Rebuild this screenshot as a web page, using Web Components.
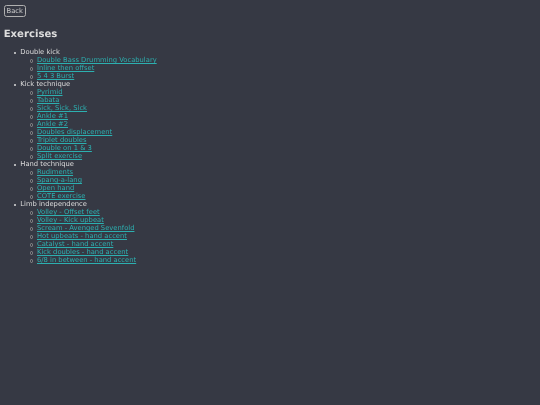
<!DOCTYPE html>
<html>
<head>
<meta charset="utf-8">
<title>Exercises</title>
<style>
  html, body { margin: 0; height: 100%; background: #363944; }
</style>
</head>
<body>
<exercise-page>
  <back-button slot="back">Back</back-button>
  <span slot="title">Exercises</span>
  <exercise-group name="Double kick">
    <exercise-link>Double Bass Drumming Vocabulary</exercise-link>
    <exercise-link>Inline then offset</exercise-link>
    <exercise-link>5 4 3 Burst</exercise-link>
  </exercise-group>
  <exercise-group name="Kick technique">
    <exercise-link>Pyrimid</exercise-link>
    <exercise-link>Tabata</exercise-link>
    <exercise-link>Sick, Sick, Sick</exercise-link>
    <exercise-link>Ankle #1</exercise-link>
    <exercise-link>Ankle #2</exercise-link>
    <exercise-link>Doubles displacement</exercise-link>
    <exercise-link>Triplet doubles</exercise-link>
    <exercise-link>Double on 1 &amp; 3</exercise-link>
    <exercise-link>Split exercise</exercise-link>
  </exercise-group>
  <exercise-group name="Hand technique">
    <exercise-link>Rudiments</exercise-link>
    <exercise-link>Spang-a-lang</exercise-link>
    <exercise-link>Open hand</exercise-link>
    <exercise-link>COTE exercise</exercise-link>
  </exercise-group>
  <exercise-group name="Limb independence">
    <exercise-link>Volley - Offset feet</exercise-link>
    <exercise-link>Volley - Kick upbeat</exercise-link>
    <exercise-link>Scream - Avenged Sevenfold</exercise-link>
    <exercise-link>Hot upbeats - hand accent</exercise-link>
    <exercise-link>Catalyst - hand accent</exercise-link>
    <exercise-link>Kick doubles - hand accent</exercise-link>
    <exercise-link>6/8 in between - hand accent</exercise-link>
  </exercise-group>
</exercise-page>

<script>
class ExercisePage extends HTMLElement {
  constructor() {
    super();
    this.attachShadow({ mode: 'open' });
    this.shadowRoot.innerHTML = `
      <style>
        :host {
          display: block;
          min-height: 405px;
          box-sizing: border-box;
          padding: 5px 4px 0;
          background: #363944;
          color: #ddd;
          font-family: "DejaVu Sans", sans-serif;
          font-size: 6.77px;
          line-height: 8px;
          text-rendering: geometricPrecision;
          filter: blur(0.3px);
        }
        h2 {
          margin: 10.5px 0 6.5px -0.3px;
          font-size: 10.1px;
          line-height: 14px;
          font-weight: bold;
        }
        .list {
          display: flex;
          flex-direction: column;
        }
      </style>
      <slot name="back"></slot>
      <h2><slot name="title"></slot></h2>
      <div class="list"><slot></slot></div>
    `;
  }
}

class BackButton extends HTMLElement {
  constructor() {
    super();
    this.attachShadow({ mode: 'open' });
    this.shadowRoot.innerHTML = `
      <style>
        :host {
          display: block;
          width: 21.5px;
          box-sizing: border-box;
          height: 12px;
          border: 1px solid #b0b0b0;
          border-radius: 2.5px;
          text-align: center;
          line-height: 10px;
          color: #ccc;
        }
      </style>
      <slot></slot>
    `;
  }
}

class ExerciseGroup extends HTMLElement {
  constructor() {
    super();
    this.attachShadow({ mode: 'open' });
    this.shadowRoot.innerHTML = `
      <style>
        :host { display: block; padding-left: 16.3px; }
        .name { position: relative; height: 8px; }
        .name::before {
          content: "";
          position: absolute;
          left: -6.5px;
          top: 3.5px;
          width: 2px;
          height: 2px;
          border-radius: 50%;
          background: #ddd;
        }
        .items { padding-left: 16.7px; }
      </style>
      <div class="name"></div>
      <div class="items"><slot></slot></div>
    `;
    this.shadowRoot.querySelector('.name').textContent = this.getAttribute('name');
  }
}

class ExerciseLink extends HTMLElement {
  constructor() {
    super();
    this.attachShadow({ mode: 'open' });
    this.shadowRoot.innerHTML = `
      <style>
        :host { display: block; position: relative; height: 8px; color: #2cb0b0; }
        :host::before {
          content: "";
          position: absolute;
          left: -7.2px;
          top: 3px;
          width: 1.5px;
          height: 1.5px;
          border: 0.5px solid #8e8e8e;
          border-radius: 50%;
        }
        a { color: inherit; text-decoration: underline; }
      </style>
      <a href="#"><slot></slot></a>
    `;
  }
}

customElements.define('exercise-page', ExercisePage);
customElements.define('back-button', BackButton);
customElements.define('exercise-group', ExerciseGroup);
customElements.define('exercise-link', ExerciseLink);
</script>
</body>
</html>
